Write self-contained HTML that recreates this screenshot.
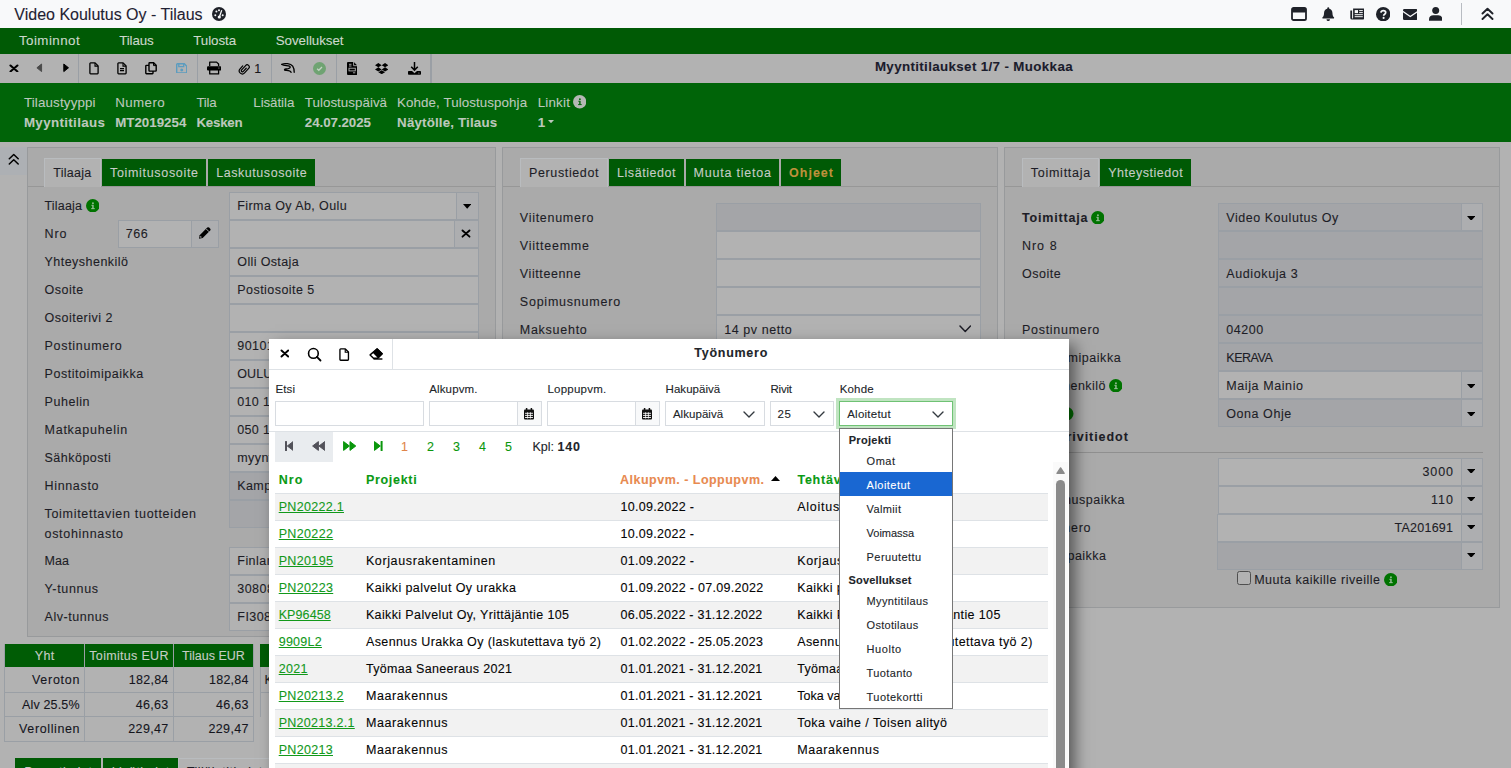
<!DOCTYPE html>
<html lang="fi"><head><meta charset="utf-8"><title>Video Koulutus Oy - Tilaus</title>
<style>
*{box-sizing:border-box;margin:0;padding:0}
html,body{width:1511px;height:768px;overflow:hidden;background:#b2b2b2;font-family:"Liberation Sans", sans-serif;color:#1d1d26}
#app{position:relative;width:1511px;height:768px;overflow:hidden}
#app div,#app svg,#app .t{position:absolute}
.t{white-space:pre;line-height:normal;text-decoration:none;color:#1d1d26;-webkit-text-stroke:.1px currentColor}
.lnk{text-decoration:underline;text-underline-offset:1px;text-decoration-thickness:1px}
.panel{background:#aaaaaa;border:1px solid #989a9c}
.f{background:#b2b2b2;border:1px solid #9a9fa5}
.fd{background:#a4a5a8;border:1px solid #9a9fa5}
.btn{background:#adaeb0;border:1px solid #9a9fa5}
.tab{background:#005a05}
.tabsel{background:#b2b2b2;border:1px solid #989a9c;border-bottom:none}
.sep{background:#9a9fa5;width:1px}
.mi{background:#fff;border:1px solid #d8dce1}
</style></head>
<body><div id="app">
<div class="" style="left:0px;top:0px;width:1511px;height:28px;background:#f8f9fa"></div>
<span class="t" style="left:14.30px;top:5.90px;font-size:16px;color:#1f2233;">Video Koulutus Oy - Tilaus</span>
<svg style="left:212px;top:7px" width="14" height="14" viewBox="0 0 14 14" ><circle cx="7" cy="7" r="7" fill="#1f2229"/><circle cx="3.3" cy="8.2" r="1" fill="#f8f9fa"/><circle cx="4.4" cy="4.4" r="1" fill="#f8f9fa"/><circle cx="7" cy="3.2" r="1" fill="#f8f9fa"/><circle cx="10.7" cy="8.2" r="1" fill="#f8f9fa"/><path d="M9.6 3.6L7.6 9.2" stroke="#f8f9fa" stroke-width="1.3" stroke-linecap="round"/><circle cx="7.3" cy="10" r="1.6" fill="#f8f9fa"/></svg>
<svg style="left:1291px;top:7px" width="16" height="14" viewBox="0 0 16 14" ><rect x="1" y="1" width="14" height="12" rx="1.6" fill="none" stroke="#1f2229" stroke-width="1.8"/><rect x="1" y="1" width="14" height="4.6" rx="1" fill="#1f2229"/></svg>
<svg style="left:1322px;top:7px" width="12.5" height="14" viewBox="0 0 12.5 14" ><path d="M6.25 0.3a1 1 0 0 1 1 1v.5c2 .5 3.2 2.100 3.2 4.2 0 2.400.7 3.500 1.500 4.300.5.500.2 1.300-.5 1.300H1.05c-.7 0-1-.8-.5-1.300C1.350 9.500 2.050 8.400 2.050 6c0-2.100 1.200-3.700 3.200-4.200v-.5a1 1 0 0 1 1-1Z" fill="#1f2229"/><path d="M4.5 12.3h3.500a1.750 1.750 0 0 1-3.500 0Z" fill="#1f2229"/></svg>
<svg style="left:1349.5px;top:8px" width="14.5" height="12" viewBox="0 0 14.5 12" ><path d="M3.2.5h10.3a.8 .8 0 0 1 .8 .8v8.700a1.600 1.600 0 0 1-1.600 1.600H2a1.700 1.700 0 0 1-1.700-1.700V2.600h1.800v7.300a.5 .5 0 0 0 1 0V.6Z" fill="#1f2229"/><rect x="4.700" y="2.100" width="3.300" height="3" fill="#f8f9fa"/><path d="M9.200 2.600h3.600M9.200 4.600h3.600M4.700 6.700h8.100M4.700 8.700h8.100" stroke="#f8f9fa" stroke-width="1"/></svg>
<svg style="left:1376px;top:7px" width="14.4" height="14.4" viewBox="0 0 14.4 14.4" ><circle cx="7.2" cy="7.2" r="7.2" fill="#1f2229"/><path d="M4.900 5.600c.2-1.300 1.100-2 2.400-2 1.400 0 2.400.8 2.400 2 0 1-.6 1.500-1.300 1.900-.5.300-.7.500-.7 1v.2" fill="none" stroke="#f8f9fa" stroke-width="1.700"/><circle cx="7.600" cy="10.900" r="1.050" fill="#f8f9fa"/></svg>
<svg style="left:1402.5px;top:8.5px" width="14.5" height="11" viewBox="0 0 14.5 11" ><path d="M1.300 0h11.900a1.300 1.300 0 0 1 1.300 1.300v.5L7.250 6.700 0 1.800v-.5A1.300 1.300 0 0 1 1.300 0Z" fill="#1f2229"/><path d="M0 3.300l7.250 4.900 7.250-4.900v6.400a1.300 1.300 0 0 1-1.300 1.300H1.300A1.300 1.300 0 0 1 0 9.700Z" fill="#1f2229"/></svg>
<svg style="left:1429px;top:7px" width="13.4" height="14" viewBox="0 0 13.4 14" ><circle cx="6.700" cy="3.600" r="3.500" fill="#1f2229"/><path d="M0 13.800v-1.600c0-2.300 1.900-3.900 4.200-3.900h5c2.300 0 4.200 1.600 4.200 3.900v1.600Z" fill="#1f2229"/></svg>
<div class="" style="left:1461px;top:3px;width:1px;height:22px;background:#b8bcc2"></div>
<svg style="left:1481px;top:6.5px" width="13" height="13.5" viewBox="0 0 13 13.5" ><path d="M1.500 6.500L6.500 1.700L11.500 6.500M1.500 12L6.500 7.200L11.500 12" fill="none" stroke="#1f2229" stroke-width="1.900" stroke-linecap="round" stroke-linejoin="round"/></svg>
<div class="" style="left:0px;top:28px;width:1511px;height:26px;background:#005a05"></div>
<span class="t" style="left:18.90px;top:32.90px;font-size:13.33px;color:#ccd8cc;letter-spacing:0.469px;">Toiminnot</span>
<span class="t" style="left:119.20px;top:32.90px;font-size:13.33px;color:#ccd8cc;letter-spacing:-0.113px;">Tilaus</span>
<span class="t" style="left:193.20px;top:32.90px;font-size:13.33px;color:#ccd8cc;letter-spacing:-0.036px;">Tulosta</span>
<span class="t" style="left:275.70px;top:32.90px;font-size:13.33px;color:#ccd8cc;letter-spacing:-0.027px;">Sovellukset</span>
<div class="" style="left:0px;top:54px;width:1511px;height:29px;background:#b2b2b2"></div>
<div class="sep" style="left:78px;top:54px;width:1px;height:29px;"></div>
<div class="sep" style="left:197px;top:54px;width:1px;height:29px;"></div>
<div class="sep" style="left:271px;top:54px;width:1px;height:29px;"></div>
<div class="sep" style="left:336px;top:54px;width:1px;height:29px;"></div>
<div class="sep" style="left:430px;top:54px;width:1px;height:29px;"></div>
<div class="sep" style="left:431px;top:54px;width:1px;height:29px;"></div>
<svg style="left:8.7px;top:63.53px" width="9.9" height="8.934000000000001" viewBox="0 0 9.9 8.934000000000001" ><path d="M1.5 1.5L8.4 7.434M8.4 1.5L1.5 7.434" stroke="#000" stroke-width="2.1" stroke-linecap="round"/></svg>
<svg style="left:36.3px;top:63.2px" width="6.4" height="9.6" viewBox="0 0 6.4 9.6" ><path d="M5.600 1V8.600L.9 4.800Z" fill="#4a4a4a" stroke="#4a4a4a" stroke-width="1" stroke-linejoin="round"/></svg>
<svg style="left:63.1px;top:63.2px" width="6.4" height="9.6" viewBox="0 0 6.4 9.6" ><path d="M.8 1V8.600L5.500 4.800Z" fill="#000" stroke="#000" stroke-width="1" stroke-linejoin="round"/></svg>
<svg style="left:88.7px;top:62px" width="10" height="12.5" viewBox="0 0 10 12.5" ><path d="M1.6 .9H6.1L9.1 3.9V11.1a.7 .7 0 0 1-.7 .7H1.6a.7 .7 0 0 1-.7-.7V1.6a.7 .7 0 0 1 .7-.7Z" fill="none" stroke="#000" stroke-width="1.3" stroke-linejoin="round"/><path d="M6 1V4.1H9" fill="none" stroke="#000" stroke-width="1.1"/></svg>
<svg style="left:117px;top:62px" width="10" height="12.5" viewBox="0 0 10 12.5" ><path d="M1.6 .9H6.1L9.1 3.9V11.1a.7 .7 0 0 1-.7 .7H1.6a.7 .7 0 0 1-.7-.7V1.6a.7 .7 0 0 1 .7-.7Z" fill="none" stroke="#000" stroke-width="1.3" stroke-linejoin="round"/><path d="M6 1V4.1H9" fill="none" stroke="#000" stroke-width="1.1"/><path d="M3 6.6H7M3 8.6H7" stroke="#000" stroke-width="1.1"/></svg>
<svg style="left:145px;top:62px" width="12" height="12.5" viewBox="0 0 12 12.5" ><path d="M4.600 .8H8.600L11.200 3.400V8.500a.6 .6 0 0 1-.6 .6H4.600a.6 .6 0 0 1-.6-.6V1.400a.6 .6 0 0 1 .6-.6Z" fill="none" stroke="#000" stroke-width="1.400"/><path d="M8.500 1V3.600H11" fill="none" stroke="#000" stroke-width="1"/><path d="M4 3.400H1.400a.6 .6 0 0 0-.6 .6V11.100a.6 .6 0 0 0 .6 .6H7.400a.6 .6 0 0 0 .6-.6V9.100" fill="none" stroke="#000" stroke-width="1.400"/></svg>
<svg style="left:175.5px;top:62.8px" width="11.5" height="10.7" viewBox="0 0 11.5 10.7" ><path d="M1.400 .7H8.300L10.800 3.200V9.300a.7 .7 0 0 1-.7 .7H1.400a.7 .7 0 0 1-.7-.7V1.400a.7 .7 0 0 1 .7-.7Z" fill="none" stroke="#5b9cbf" stroke-width="1.400"/><path d="M2.800 1V3.700H7.700V1" fill="none" stroke="#5b9cbf" stroke-width="1.300"/><circle cx="5.750" cy="6.900" r="1.500" fill="#5b9cbf"/></svg>
<svg style="left:207px;top:61.2px" width="14.3" height="13.6" viewBox="0 0 14.3 13.6" ><path d="M2.700 5V1.100H9.600L11.600 3V5" fill="none" stroke="#000" stroke-width="1.300" stroke-linejoin="round"/><rect x="0" y="5.300" width="14.300" height="4.300" rx="1.100" fill="#000"/><circle cx="11.900" cy="7" r=".6" fill="#b2b2b2"/><path d="M2.700 9V12.900H11.600V9" fill="none" stroke="#000" stroke-width="1.300" stroke-linejoin="round"/></svg>
<svg style="left:238.3px;top:61.6px" width="12.6" height="13.4" viewBox="0 0 12.6 13.4" ><g transform="translate(6.2 6.8) rotate(42) scale(.8)"><path d="M-3.800 -1.500V3.500A3.800 3.800 0 0 0 3.800 3.500V-4.200A2.600 2.600 0 0 0 -1.400 -4.200V3.200A1.400 1.400 0 0 0 1.400 3.200V-2.200" fill="none" stroke="#000" stroke-width="1.500" stroke-linecap="round"/></g></svg>
<span class="t" style="left:254.20px;top:62.00px;font-size:12.5px;color:#16161d;">1</span>
<svg style="left:281px;top:63px" width="14" height="10.5" viewBox="0 0 14 10.5" ><path d="M.9 1.400C4 .2 9.500 .1 11.700 3.200 12.900 5 13.200 7.500 13.200 9.300" fill="none" stroke="#000" stroke-width="1.300" stroke-linecap="round"/><path d="M.9 1.400C3 3 6.500 2.300 8.500 3.200 10.300 4.200 8.500 5.900 4.800 6 3 6.100 3 7.300 4.800 7.400 7.500 7.500 9.600 7.400 10.100 9.400" fill="none" stroke="#000" stroke-width="1.300" stroke-linecap="round" stroke-linejoin="round"/></svg>
<svg style="left:313px;top:61.7px" width="13" height="13" viewBox="0 0 13 13" ><circle cx="6.500" cy="6.500" r="6.500" fill="#6fa372"/><path d="M4.100 6.700L5.800 8.300L9 5" fill="none" stroke="#c4d3c4" stroke-width="1.300"/></svg>
<svg style="left:346.5px;top:61.7px" width="10.3" height="13" viewBox="0 0 10.3 13" ><path d="M1 0H6.800L10.300 3.500V12a1 1 0 0 1-1 1H1a1 1 0 0 1-1-1V1a1 1 0 0 1 1-1Z" fill="#000"/><path d="M6.600 0V3.700H10.300" fill="none" stroke="#b2b2b2" stroke-width=".9"/><rect x="2" y="6.200" width="6.300" height="2.700" fill="none" stroke="#b2b2b2" stroke-width=".9"/><path d="M2 2.300H4.500M2 4H4.500M6 10.800H8.300" stroke="#b2b2b2" stroke-width=".9"/></svg>
<svg style="left:375px;top:62.8px" width="13.4" height="11.2" viewBox="0 0 13.4 11.2" ><path d="M3.350 0L6.700 2.150 3.350 4.300 0 2.150ZM10.050 0L13.400 2.150 10.050 4.300 6.700 2.150ZM0 6.450L3.350 4.300 6.700 6.450 3.350 8.600ZM10.050 4.300L13.400 6.450 10.050 8.600 6.700 6.450ZM3.350 9.300L6.700 7.150 10.050 9.300 6.700 11.200Z" fill="#000"/></svg>
<svg style="left:407.5px;top:62px" width="13" height="12.7" viewBox="0 0 13 12.7" ><path d="M6.500 0V8M3.200 4.800L6.500 8.100L9.800 4.800" fill="none" stroke="#000" stroke-width="1.500" stroke-linejoin="miter"/><path d="M.8 9H4L6.500 11.200L9 9H12.200a.8 .8 0 0 1 .8 .8V11.900a.8 .8 0 0 1-.8 .8H.8a.8 .8 0 0 1-.8-.8V9.800a.8 .8 0 0 1 .8-.8Z" fill="#000"/><circle cx="10.900" cy="11" r=".55" fill="#b2b2b2"/></svg>
<span class="t" style="left:874.90px;top:59.20px;font-size:13.33px;font-weight:700;color:#1b1c2c;letter-spacing:0.368px;">Myyntitilaukset 1/7 - Muokkaa</span>
<div class="" style="left:0px;top:83px;width:1511px;height:59px;background:#006408"></div>
<span class="t" style="left:23.90px;top:95.30px;font-size:13.33px;color:#bcc8bc;letter-spacing:0.164px;">Tilaustyyppi</span>
<span class="t" style="left:23.90px;top:115.00px;font-size:13.33px;font-weight:700;color:#bcc8bc;letter-spacing:0.361px;">Myyntitilaus</span>
<span class="t" style="left:115.20px;top:95.30px;font-size:13.33px;color:#bcc8bc;letter-spacing:0.419px;">Numero</span>
<span class="t" style="left:115.20px;top:115.00px;font-size:13.33px;font-weight:700;color:#bcc8bc;letter-spacing:0.007px;">MT2019254</span>
<span class="t" style="left:196.40px;top:95.30px;font-size:13.33px;color:#bcc8bc;letter-spacing:-0.195px;">Tila</span>
<span class="t" style="left:196.40px;top:115.00px;font-size:13.33px;font-weight:700;color:#bcc8bc;letter-spacing:-0.224px;">Kesken</span>
<span class="t" style="left:253.30px;top:95.30px;font-size:13.33px;color:#bcc8bc;letter-spacing:-0.071px;">Lisätila</span>
<span class="t" style="left:304.80px;top:95.30px;font-size:13.33px;color:#bcc8bc;letter-spacing:0.038px;">Tulostuspäivä</span>
<span class="t" style="left:304.80px;top:115.00px;font-size:13.33px;font-weight:700;color:#bcc8bc;letter-spacing:-0.058px;">24.07.2025</span>
<span class="t" style="left:397.10px;top:95.30px;font-size:13.33px;color:#bcc8bc;letter-spacing:0.095px;">Kohde, Tulostuspohja</span>
<span class="t" style="left:397.10px;top:115.00px;font-size:13.33px;font-weight:700;color:#bcc8bc;letter-spacing:0.165px;">Näytölle, Tilaus</span>
<span class="t" style="left:537.70px;top:95.30px;font-size:13.33px;color:#bcc8bc;letter-spacing:0.215px;">Linkit</span>
<span class="t" style="left:537.70px;top:115.00px;font-size:13.33px;font-weight:700;color:#bcc8bc;">1</span>
<svg style="left:572.65px;top:95.4px" width="13.4" height="13.4" viewBox="0 0 13.4 13.4" ><circle cx="6.7" cy="6.7" r="6.7" fill="#b5b8b5"/><rect x="6.2" y="5.8" width="1.4" height="3.8" fill="#006408"/><rect x="5.300000000000001" y="5.8" width="1.4" height=".9" fill="#006408"/><rect x="5.1" y="9.1" width="3.6" height="1" fill="#006408"/><circle cx="6.9" cy="4.2" r=".9" fill="#006408"/></svg>
<svg style="left:548.1px;top:120px" width="6" height="3.2" viewBox="0 0 6 3.2" ><path d="M0 0H6L3 3.200Z" fill="#bcc8bc"/></svg>
<div class="" style="left:0px;top:147px;width:27px;height:28px;background:#adb0b4"></div>
<svg style="left:7.8px;top:153.3px" width="11.5" height="12.5" viewBox="0 0 11.5 12.5" ><path d="M1.300 5.800L5.750 1.500L10.200 5.800M1.300 11L5.750 6.700L10.200 11" fill="none" stroke="#000" stroke-width="1.500" stroke-linecap="round" stroke-linejoin="round"/></svg>
<div class="panel" style="left:27px;top:147px;width:469px;height:490px;"></div>
<div class="" style="left:28px;top:186px;width:467px;height:1px;background:#979797"></div>
<div class="tabsel" style="left:44px;top:158px;width:56.5px;height:29px;border-color:#b9bcbf;background:#b2b2b2"></div>
<span class="t" style="left:53.30px;top:165.80px;font-size:12.5px;letter-spacing:0.257px;">Tilaaja</span>
<div class="tab" style="left:102px;top:159px;width:104px;height:27px;"></div>
<span class="t" style="left:110.00px;top:165.80px;font-size:12.5px;color:#c6cdc6;letter-spacing:0.677px;">Toimitusosoite</span>
<div class="tab" style="left:208px;top:159px;width:107px;height:27px;"></div>
<span class="t" style="left:216.25px;top:165.80px;font-size:12.5px;color:#c6cdc6;letter-spacing:0.547px;">Laskutusosoite</span>
<span class="t" style="left:44.50px;top:199.20px;font-size:12.5px;letter-spacing:0.190px;">Tilaaja</span>
<div class="f" style="left:229px;top:192px;width:250px;height:28px;"></div>
<div class="btn" style="left:456px;top:192px;width:23px;height:28px;"></div>
<svg style="left:462.8px;top:203.79999999999998px" width="8.4" height="4.8" viewBox="0 0 8.4 4.8" ><path d="M0 0H8.4L4.2 4.8Z" fill="#000"/></svg>
<span class="t" style="left:237.30px;top:199.00px;font-size:12.5px;letter-spacing:0.412px;">Firma Oy Ab, Oulu</span>
<span class="t" style="left:44.50px;top:227.20px;font-size:12.5px;letter-spacing:0.922px;">Nro</span>
<div class="f" style="left:229px;top:220px;width:250px;height:28px;"></div>
<div class="btn" style="left:454px;top:220px;width:25px;height:28px;"></div>
<svg style="left:461.3px;top:228.82px" width="10" height="9.16" viewBox="0 0 10 9.16" ><path d="M1.5 1.5L8.5 7.66M8.5 1.5L1.5 7.66" stroke="#000" stroke-width="1.9" stroke-linecap="round"/></svg>
<span class="t" style="left:44.50px;top:255.20px;font-size:12.5px;letter-spacing:0.473px;">Yhteyshenkilö</span>
<div class="f" style="left:229px;top:248px;width:250px;height:28px;"></div>
<span class="t" style="left:237.30px;top:255.00px;font-size:12.5px;letter-spacing:0.364px;">Olli Ostaja</span>
<span class="t" style="left:44.50px;top:283.20px;font-size:12.5px;letter-spacing:0.532px;">Osoite</span>
<div class="f" style="left:229px;top:276px;width:250px;height:28px;"></div>
<span class="t" style="left:237.30px;top:283.00px;font-size:12.5px;letter-spacing:0.443px;">Postiosoite 5</span>
<span class="t" style="left:44.50px;top:311.20px;font-size:12.5px;letter-spacing:0.497px;">Osoiterivi 2</span>
<div class="f" style="left:229px;top:304px;width:250px;height:28px;"></div>
<span class="t" style="left:44.50px;top:339.20px;font-size:12.5px;letter-spacing:0.711px;">Postinumero</span>
<div class="f" style="left:229px;top:332px;width:250px;height:28px;"></div>
<span class="t" style="left:237.30px;top:339.00px;font-size:12.5px;letter-spacing:0.434px;">90101</span>
<span class="t" style="left:44.50px;top:367.20px;font-size:12.5px;letter-spacing:0.558px;">Postitoimipaikka</span>
<div class="f" style="left:229px;top:360px;width:250px;height:28px;"></div>
<span class="t" style="left:237.30px;top:367.00px;font-size:12.5px;letter-spacing:0.089px;">OULU</span>
<span class="t" style="left:44.50px;top:395.20px;font-size:12.5px;letter-spacing:0.549px;">Puhelin</span>
<div class="f" style="left:229px;top:388px;width:250px;height:28px;"></div>
<span class="t" style="left:237.30px;top:395.00px;font-size:12.5px;letter-spacing:0.321px;">010 123 4567</span>
<span class="t" style="left:44.50px;top:423.20px;font-size:12.5px;letter-spacing:0.758px;">Matkapuhelin</span>
<div class="f" style="left:229px;top:416px;width:250px;height:28px;"></div>
<span class="t" style="left:237.30px;top:423.00px;font-size:12.5px;letter-spacing:0.321px;">050 123 4567</span>
<span class="t" style="left:44.50px;top:451.20px;font-size:12.5px;letter-spacing:0.493px;">Sähköposti</span>
<div class="f" style="left:229px;top:444px;width:250px;height:28px;"></div>
<span class="t" style="left:237.30px;top:451.00px;font-size:12.5px;letter-spacing:0.406px;">myynti@firma.fi</span>
<span class="t" style="left:44.50px;top:479.20px;font-size:12.5px;letter-spacing:0.665px;">Hinnasto</span>
<div class="fd" style="left:229px;top:472px;width:250px;height:28px;"></div>
<span class="t" style="left:237.30px;top:479.00px;font-size:12.5px;letter-spacing:0.386px;">Kampanja</span>
<svg style="left:85.65px;top:198.5px" width="13.5" height="13.5" viewBox="0 0 13.5 13.5" ><circle cx="6.75" cy="6.75" r="6.75" fill="#007300"/><rect x="6.25" y="5.85" width="1.4" height="3.8" fill="#9dc09d"/><rect x="5.35" y="5.85" width="1.4" height=".9" fill="#9dc09d"/><rect x="5.15" y="9.15" width="3.6" height="1" fill="#9dc09d"/><circle cx="6.95" cy="4.25" r=".9" fill="#9dc09d"/></svg>
<div class="f" style="left:118px;top:220px;width:74px;height:28px;"></div>
<span class="t" style="left:125.80px;top:227.20px;font-size:12.5px;letter-spacing:0.470px;">766</span>
<div class="btn" style="left:191px;top:220px;width:28px;height:28px;"></div>
<svg style="left:198.4px;top:226px" width="13.8" height="13.8" viewBox="0 0 13 13" ><path d="M1 12L1.600 8.600L8.700 1.500a1.300 1.300 0 0 1 1.800 0L11.500 2.500a1.300 1.300 0 0 1 0 1.800L4.400 11.400Z" fill="#000"/><path d="M7.600 2.600L10.400 5.400" stroke="#adaeb0" stroke-width=".9"/><path d="M2.300 9.300L3.700 10.700L2 11Z" fill="#adaeb0"/></svg>
<span class="t" style="left:44.50px;top:507.00px;font-size:12.5px;letter-spacing:0.695px;">Toimitettavien tuotteiden</span>
<span class="t" style="left:44.50px;top:527.00px;font-size:12.5px;letter-spacing:0.692px;">ostohinnasto</span>
<div class="fd" style="left:229px;top:500px;width:250px;height:28px;"></div>
<span class="t" style="left:44.50px;top:554.20px;font-size:12.5px;letter-spacing:0.086px;">Maa</span>
<div class="f" style="left:229px;top:547px;width:250px;height:28px;"></div>
<span class="t" style="left:237.30px;top:554.00px;font-size:12.5px;letter-spacing:0.450px;">Finland</span>
<span class="t" style="left:44.50px;top:582.20px;font-size:12.5px;letter-spacing:0.658px;">Y-tunnus</span>
<div class="f" style="left:229px;top:575px;width:250px;height:28px;"></div>
<span class="t" style="left:237.30px;top:582.00px;font-size:12.5px;letter-spacing:0.450px;">3080834-5</span>
<span class="t" style="left:44.50px;top:610.20px;font-size:12.5px;letter-spacing:0.549px;">Alv-tunnus</span>
<div class="f" style="left:229px;top:603px;width:250px;height:28px;"></div>
<span class="t" style="left:237.30px;top:610.00px;font-size:12.5px;letter-spacing:0.450px;">FI30808345</span>
<div class="panel" style="left:502px;top:147px;width:496px;height:520px;"></div>
<div class="" style="left:503px;top:186px;width:494px;height:1px;background:#979797"></div>
<div class="tabsel" style="left:520px;top:158px;width:87.5px;height:29px;border-color:#b9bcbf;background:#b2b2b2"></div>
<span class="t" style="left:529.00px;top:165.80px;font-size:12.5px;letter-spacing:0.627px;">Perustiedot</span>
<div class="tab" style="left:609px;top:159px;width:74.5px;height:27px;"></div>
<span class="t" style="left:617.00px;top:165.80px;font-size:12.5px;color:#c6cdc6;letter-spacing:0.554px;">Lisätiedot</span>
<div class="tab" style="left:685.5px;top:159px;width:93.5px;height:27px;"></div>
<span class="t" style="left:693.50px;top:165.80px;font-size:12.5px;color:#c6cdc6;letter-spacing:0.791px;">Muuta tietoa</span>
<div class="tab" style="left:781px;top:159px;width:60px;height:27px;"></div>
<span class="t" style="left:789.00px;top:165.80px;font-size:12.5px;font-weight:700;color:#bf913c;letter-spacing:1.019px;">Ohjeet</span>
<span class="t" style="left:519.80px;top:210.70px;font-size:12.5px;letter-spacing:0.722px;">Viitenumero</span>
<div class="fd" style="left:716px;top:203px;width:265px;height:28px;"></div>
<span class="t" style="left:519.80px;top:238.70px;font-size:12.5px;letter-spacing:0.767px;">Viitteemme</span>
<div class="f" style="left:716px;top:231px;width:265px;height:28px;"></div>
<span class="t" style="left:519.80px;top:266.70px;font-size:12.5px;letter-spacing:0.603px;">Viitteenne</span>
<div class="f" style="left:716px;top:259px;width:265px;height:28px;"></div>
<span class="t" style="left:519.80px;top:294.70px;font-size:12.5px;letter-spacing:0.774px;">Sopimusnumero</span>
<div class="f" style="left:716px;top:287px;width:265px;height:28px;"></div>
<span class="t" style="left:519.80px;top:322.70px;font-size:12.5px;letter-spacing:0.730px;">Maksuehto</span>
<div class="f" style="left:716px;top:315px;width:265px;height:28px;"></div>
<span class="t" style="left:724.30px;top:323.00px;font-size:12.5px;letter-spacing:0.554px;">14 pv netto</span>
<svg style="left:958.95px;top:325.25px" width="12.5" height="7.5" viewBox="0 0 12.5 7.5" ><path d="M1 1L6.25 6.5L11.5 1" fill="none" stroke="#1d1d26" stroke-width="1.5" stroke-linecap="round" stroke-linejoin="round"/></svg>
<div class="panel" style="left:1004px;top:147px;width:496px;height:461px;"></div>
<div class="" style="left:1005px;top:186px;width:494px;height:1px;background:#979797"></div>
<div class="tabsel" style="left:1022px;top:158px;width:77px;height:29px;border-color:#b9bcbf;background:#b2b2b2"></div>
<span class="t" style="left:1030.75px;top:165.80px;font-size:12.5px;letter-spacing:0.745px;">Toimittaja</span>
<div class="tab" style="left:1100px;top:159px;width:91px;height:27px;"></div>
<span class="t" style="left:1108.25px;top:165.80px;font-size:12.5px;color:#c6cdc6;letter-spacing:0.518px;">Yhteystiedot</span>
<span class="t" style="left:1022.00px;top:210.70px;font-size:12.5px;font-weight:700;letter-spacing:0.821px;">Toimittaja</span>
<div class="fd" style="left:1218px;top:203px;width:265px;height:28px;"></div>
<div class="btn" style="left:1460.5px;top:203px;width:22.5px;height:28px;"></div>
<svg style="left:1467.05px;top:215.6px" width="8.4" height="4.8" viewBox="0 0 8.4 4.8" ><path d="M0 0H8.4L4.2 4.8Z" fill="#000"/></svg>
<span class="t" style="left:1226.30px;top:211.00px;font-size:12.5px;letter-spacing:0.537px;">Video Koulutus Oy</span>
<span class="t" style="left:1022.00px;top:238.70px;font-size:12.5px;letter-spacing:0.922px;">Nro</span>
<div class="fd" style="left:1218px;top:231px;width:265px;height:28px;"></div>
<span class="t" style="left:1022.00px;top:266.70px;font-size:12.5px;letter-spacing:0.532px;">Osoite</span>
<div class="fd" style="left:1218px;top:259px;width:265px;height:28px;"></div>
<span class="t" style="left:1226.30px;top:267.00px;font-size:12.5px;letter-spacing:0.607px;">Audiokuja 3</span>
<div class="fd" style="left:1218px;top:287px;width:265px;height:28px;"></div>
<span class="t" style="left:1022.00px;top:322.70px;font-size:12.5px;letter-spacing:0.711px;">Postinumero</span>
<div class="fd" style="left:1218px;top:315px;width:265px;height:28px;"></div>
<span class="t" style="left:1226.30px;top:323.00px;font-size:12.5px;letter-spacing:0.559px;">04200</span>
<span class="t" style="left:1022.00px;top:350.70px;font-size:12.5px;letter-spacing:0.558px;">Postitoimipaikka</span>
<div class="fd" style="left:1218px;top:343px;width:265px;height:28px;"></div>
<span class="t" style="left:1226.30px;top:351.00px;font-size:12.5px;letter-spacing:-0.472px;">KERAVA</span>
<span class="t" style="left:1022.00px;top:378.70px;font-size:12.5px;letter-spacing:0.473px;">Yhteyshenkilö</span>
<div class="f" style="left:1218px;top:371px;width:265px;height:28px;"></div>
<div class="btn" style="left:1460.5px;top:371px;width:22.5px;height:28px;"></div>
<svg style="left:1467.05px;top:383.6px" width="8.4" height="4.8" viewBox="0 0 8.4 4.8" ><path d="M0 0H8.4L4.2 4.8Z" fill="#000"/></svg>
<span class="t" style="left:1226.30px;top:379.00px;font-size:12.5px;letter-spacing:0.593px;">Maija Mainio</span>
<span class="t" style="left:1022.00px;top:406.70px;font-size:12.5px;letter-spacing:0.836px;">Myyjä</span>
<div class="fd" style="left:1218px;top:399px;width:265px;height:28px;"></div>
<div class="btn" style="left:1460.5px;top:399px;width:22.5px;height:28px;"></div>
<svg style="left:1467.05px;top:411.6px" width="8.4" height="4.8" viewBox="0 0 8.4 4.8" ><path d="M0 0H8.4L4.2 4.8Z" fill="#000"/></svg>
<span class="t" style="left:1226.30px;top:407.00px;font-size:12.5px;letter-spacing:0.554px;">Oona Ohje</span>
<span class="t" style="left:1049.70px;top:238.70px;font-size:12.5px;">8</span>
<svg style="left:1090.75px;top:210.6px" width="13.5" height="13.5" viewBox="0 0 13.5 13.5" ><circle cx="6.75" cy="6.75" r="6.75" fill="#007300"/><rect x="6.25" y="5.85" width="1.4" height="3.8" fill="#9dc09d"/><rect x="5.35" y="5.85" width="1.4" height=".9" fill="#9dc09d"/><rect x="5.15" y="9.15" width="3.6" height="1" fill="#9dc09d"/><circle cx="6.95" cy="4.25" r=".9" fill="#9dc09d"/></svg>
<svg style="left:1108.65px;top:378.8px" width="13.5" height="13.5" viewBox="0 0 13.5 13.5" ><circle cx="6.75" cy="6.75" r="6.75" fill="#007300"/><rect x="6.25" y="5.85" width="1.4" height="3.8" fill="#9dc09d"/><rect x="5.35" y="5.85" width="1.4" height=".9" fill="#9dc09d"/><rect x="5.15" y="9.15" width="3.6" height="1" fill="#9dc09d"/><circle cx="6.95" cy="4.25" r=".9" fill="#9dc09d"/></svg>
<svg style="left:1060.15px;top:406.8px" width="13.5" height="13.5" viewBox="0 0 13.5 13.5" ><circle cx="6.75" cy="6.75" r="6.75" fill="#007300"/><rect x="6.25" y="5.85" width="1.4" height="3.8" fill="#9dc09d"/><rect x="5.35" y="5.85" width="1.4" height=".9" fill="#9dc09d"/><rect x="5.15" y="9.15" width="3.6" height="1" fill="#9dc09d"/><circle cx="6.95" cy="4.25" r=".9" fill="#9dc09d"/></svg>
<span class="t" style="left:1022.00px;top:430.00px;font-size:12.5px;font-weight:700;letter-spacing:0.941px;">Oletusrivitiedot</span>
<div class="" style="left:1022px;top:452px;width:461px;height:1px;background:#8f8f8f"></div>
<span class="t" style="left:1022.00px;top:465.00px;font-size:12.5px;letter-spacing:1.300px;">Tili</span>
<div class="f" style="left:1218px;top:458px;width:265px;height:28px;"></div>
<div class="btn" style="left:1460.5px;top:458px;width:22.5px;height:28px;"></div>
<svg style="left:1467.05px;top:468.6px" width="8.4" height="4.8" viewBox="0 0 8.4 4.8" ><path d="M0 0H8.4L4.2 4.8Z" fill="#000"/></svg>
<span class="t" style="left:1422.50px;top:465.00px;font-size:12.5px;letter-spacing:0.896px;">3000</span>
<span class="t" style="left:1022.00px;top:493.00px;font-size:12.5px;letter-spacing:0.521px;">Kustannuspaikka</span>
<div class="f" style="left:1218px;top:486px;width:265px;height:28px;"></div>
<div class="btn" style="left:1460.5px;top:486px;width:22.5px;height:28px;"></div>
<svg style="left:1467.05px;top:496.6px" width="8.4" height="4.8" viewBox="0 0 8.4 4.8" ><path d="M0 0H8.4L4.2 4.8Z" fill="#000"/></svg>
<span class="t" style="left:1431.00px;top:493.00px;font-size:12.5px;letter-spacing:1.031px;">110</span>
<span class="t" style="left:1022.00px;top:521.00px;font-size:12.5px;letter-spacing:0.746px;">Työnumero</span>
<div class="f" style="left:1217px;top:514px;width:266px;height:28px;"></div>
<div class="btn" style="left:1460.5px;top:514px;width:22.5px;height:28px;"></div>
<svg style="left:1467.05px;top:524.6px" width="8.4" height="4.8" viewBox="0 0 8.4 4.8" ><path d="M0 0H8.4L4.2 4.8Z" fill="#000"/></svg>
<span class="t" style="left:1394.50px;top:521.00px;font-size:12.5px;letter-spacing:0.248px;">TA201691</span>
<span class="t" style="left:1022.00px;top:549.00px;font-size:12.5px;letter-spacing:0.475px;">Varastopaikka</span>
<div class="fd" style="left:1217px;top:542px;width:266px;height:28px;"></div>
<div class="btn" style="left:1460.5px;top:542px;width:22.5px;height:28px;"></div>
<svg style="left:1467.05px;top:552.6px" width="8.4" height="4.8" viewBox="0 0 8.4 4.8" ><path d="M0 0H8.4L4.2 4.8Z" fill="#000"/></svg>
<div class="" style="left:1237px;top:571px;width:13.5px;height:13.5px;background:#b2b2b2;border:1.200px solid #4f4f4f;border-radius:2.500px"></div>
<span class="t" style="left:1254.20px;top:573.00px;font-size:12.5px;letter-spacing:0.508px;">Muuta kaikille riveille</span>
<svg style="left:1383.65px;top:572.9px" width="13.5" height="13.5" viewBox="0 0 13.5 13.5" ><circle cx="6.75" cy="6.75" r="6.75" fill="#007300"/><rect x="6.25" y="5.85" width="1.4" height="3.8" fill="#9dc09d"/><rect x="5.35" y="5.85" width="1.4" height=".9" fill="#9dc09d"/><rect x="5.15" y="9.15" width="3.6" height="1" fill="#9dc09d"/><circle cx="6.95" cy="4.25" r=".9" fill="#9dc09d"/></svg>
<div class="" style="left:4px;top:643.5px;width:250px;height:98px;background:#9a9fa5"></div>
<div class="" style="left:5.0px;top:644px;width:79.0px;height:22.5px;background:#005c05"></div>
<span class="t" style="left:34.70px;top:649.00px;font-size:12.5px;color:#c6cdc6;letter-spacing:0.417px;">Yht</span>
<div class="" style="left:5.0px;top:667.0px;width:79.0px;height:24.5px;background:#b2b2b2"></div>
<span class="t" style="left:31.90px;top:673.00px;font-size:12.5px;color:#15151d;letter-spacing:0.751px;">Veroton</span>
<div class="" style="left:5.0px;top:692.5px;width:79.0px;height:23.5px;background:#b2b2b2"></div>
<span class="t" style="left:22.10px;top:698.00px;font-size:12.5px;color:#15151d;letter-spacing:0.140px;">Alv 25.5%</span>
<div class="" style="left:5.0px;top:717.0px;width:79.0px;height:23.5px;background:#b2b2b2"></div>
<span class="t" style="left:19.10px;top:722.00px;font-size:12.5px;color:#15151d;letter-spacing:0.610px;">Verollinen</span>
<div class="" style="left:85.0px;top:644px;width:87.80000000000001px;height:22.5px;background:#005c05"></div>
<span class="t" style="left:89.30px;top:649.00px;font-size:12.5px;color:#c6cdc6;letter-spacing:0.316px;">Toimitus EUR</span>
<div class="" style="left:85.0px;top:667.0px;width:87.80000000000001px;height:24.5px;background:#b2b2b2"></div>
<span class="t" style="left:128.80px;top:673.00px;font-size:12.5px;color:#15151d;letter-spacing:0.253px;">182,84</span>
<div class="" style="left:85.0px;top:692.5px;width:87.80000000000001px;height:23.5px;background:#b2b2b2"></div>
<span class="t" style="left:135.80px;top:698.00px;font-size:12.5px;color:#15151d;letter-spacing:0.305px;">46,63</span>
<div class="" style="left:85.0px;top:717.0px;width:87.80000000000001px;height:23.5px;background:#b2b2b2"></div>
<span class="t" style="left:128.30px;top:722.00px;font-size:12.5px;color:#15151d;letter-spacing:0.353px;">229,47</span>
<div class="" style="left:173.8px;top:644px;width:79.19999999999999px;height:22.5px;background:#005c05"></div>
<span class="t" style="left:181.95px;top:649.00px;font-size:12.5px;color:#c6cdc6;letter-spacing:0.017px;">Tilaus EUR</span>
<div class="" style="left:173.8px;top:667.0px;width:79.19999999999999px;height:24.5px;background:#b2b2b2"></div>
<span class="t" style="left:209.00px;top:673.00px;font-size:12.5px;color:#15151d;letter-spacing:0.253px;">182,84</span>
<div class="" style="left:173.8px;top:692.5px;width:79.19999999999999px;height:23.5px;background:#b2b2b2"></div>
<span class="t" style="left:216.00px;top:698.00px;font-size:12.5px;color:#15151d;letter-spacing:0.305px;">46,63</span>
<div class="" style="left:173.8px;top:717.0px;width:79.19999999999999px;height:23.5px;background:#b2b2b2"></div>
<span class="t" style="left:208.50px;top:722.00px;font-size:12.5px;color:#15151d;letter-spacing:0.353px;">229,47</span>
<div class="" style="left:259.5px;top:643.5px;width:200px;height:73.5px;background:#9a9fa5"></div>
<div class="" style="left:260px;top:644px;width:199px;height:22.5px;background:#005c05"></div>
<div class="" style="left:260.5px;top:667px;width:198px;height:24.5px;background:#b2b2b2"></div>
<div class="" style="left:260.5px;top:692.5px;width:198px;height:24px;background:#b2b2b2"></div>
<span class="t" style="left:264.60px;top:672.80px;font-size:12.5px;letter-spacing:0.450px;">Kate</span>
<div class="tab" style="left:15px;top:758px;width:86px;height:12px;"></div>
<div class="tab" style="left:103px;top:758px;width:75px;height:12px;"></div>
<div class="tabsel" style="left:178px;top:757.5px;width:100px;height:12px;border-color:#b9bcbf"></div>
<span class="t" style="left:24.13px;top:764.60px;font-size:12.5px;color:#c6cdc6;letter-spacing:0.450px;">Perustiedot</span>
<span class="t" style="left:111.72px;top:764.60px;font-size:12.5px;color:#c6cdc6;letter-spacing:0.450px;">Lisätiedot</span>
<span class="t" style="left:187.00px;top:764.60px;font-size:12.5px;letter-spacing:0.450px;">Tiliöintitiedot</span>
<div class="" style="left:269px;top:339px;width:800px;height:440px;background:#fff;box-shadow:6px 6px 14px rgba(0,0,0,.5)"></div>
<div class="" style="left:269px;top:369px;width:800px;height:1px;background:#dee2e6"></div>
<div class="" style="left:392px;top:339px;width:1px;height:30px;background:#dee2e6"></div>
<svg style="left:279.75px;top:349.38px" width="9.7" height="9.030000000000001" viewBox="0 0 9.7 9.030000000000001" ><path d="M1.5 1.5L8.2 7.53M8.2 1.5L1.5 7.53" stroke="#000" stroke-width="1.9" stroke-linecap="round"/></svg>
<svg style="left:307.3px;top:347px" width="15" height="15" viewBox="0 0 15 15" ><circle cx="6.400" cy="6.400" r="4.850" fill="none" stroke="#000" stroke-width="1.600"/><path d="M9.900 9.900L13.500 13.500" stroke="#000" stroke-width="1.800" stroke-linecap="round"/></svg>
<svg style="left:339.3px;top:347.6px" width="10.4" height="13" viewBox="0 0 10 12.5" ><path d="M1.6 .9H6.1L9.1 3.9V11.1a.7 .7 0 0 1-.7 .7H1.6a.7 .7 0 0 1-.7-.7V1.6a.7 .7 0 0 1 .7-.7Z" fill="none" stroke="#000" stroke-width="1.3" stroke-linejoin="round"/><path d="M6 1V4.1H9" fill="none" stroke="#000" stroke-width="1.1"/></svg>
<svg style="left:368.5px;top:348px" width="14" height="12.5" viewBox="0 0 14 12.5" ><path d="M8.200 .9L13.100 5.800L8.600 10.300H4.500L1.100 6.900Z" fill="#fff" stroke="#000" stroke-width="1.400" stroke-linejoin="round"/><path d="M8.200 .9L13.100 5.800L9.400 9.500L4.500 4.600Z" fill="#000" stroke="#000" stroke-width="1.400" stroke-linejoin="round"/><path d="M4.500 11H13.400" stroke="#000" stroke-width="1.400"/></svg>
<span class="t" style="left:694.30px;top:346.00px;font-size:12.5px;font-weight:700;color:#212529;letter-spacing:0.732px;">Työnumero</span>
<span class="t" style="left:275.50px;top:382.90px;font-size:11.5px;color:#212529;letter-spacing:0.109px;">Etsi</span>
<div class="mi" style="left:275px;top:401px;width:149px;height:25px;"></div>
<span class="t" style="left:429.20px;top:382.90px;font-size:11.5px;color:#212529;letter-spacing:0.143px;">Alkupvm.</span>
<div class="mi" style="left:429px;top:401px;width:89px;height:25px;"></div>
<div class="mi" style="left:517px;top:401px;width:25px;height:25px;background:#f8f9fa"></div>
<svg style="left:524.3px;top:408.3px" width="10" height="11.4" viewBox="0 0 10 11.4" ><path d="M2.600 0V2.500M7.400 0V2.500" stroke="#111" stroke-width="1.500"/><rect x="0" y="1.400" width="10" height="10" rx="1" fill="#111"/><path d="M1 5.300H9M1 7.400H9M1 9.500H9" stroke="#fff" stroke-width=".9"/><path d="M3.600 4.300V10.500M6.400 4.300V10.500" stroke="#fff" stroke-width=".8"/></svg>
<span class="t" style="left:547.40px;top:382.90px;font-size:11.5px;color:#212529;letter-spacing:0.249px;">Loppupvm.</span>
<div class="mi" style="left:547px;top:401px;width:89px;height:25px;"></div>
<div class="mi" style="left:635px;top:401px;width:25px;height:25px;background:#f8f9fa"></div>
<svg style="left:642.3px;top:408.3px" width="10" height="11.4" viewBox="0 0 10 11.4" ><path d="M2.600 0V2.500M7.400 0V2.500" stroke="#111" stroke-width="1.500"/><rect x="0" y="1.400" width="10" height="10" rx="1" fill="#111"/><path d="M1 5.300H9M1 7.400H9M1 9.500H9" stroke="#fff" stroke-width=".9"/><path d="M3.600 4.300V10.500M6.400 4.300V10.500" stroke="#fff" stroke-width=".8"/></svg>
<span class="t" style="left:665.60px;top:382.90px;font-size:11.5px;color:#212529;letter-spacing:0.032px;">Hakupäivä</span>
<div class="mi" style="left:665px;top:401px;width:100px;height:25px;"></div>
<span class="t" style="left:672.90px;top:408.00px;font-size:11.5px;color:#212529;letter-spacing:0.053px;">Alkupäivä</span>
<svg style="left:743.1px;top:410.7px" width="12" height="7" viewBox="0 0 12 7" ><path d="M1 1L6.0 6L11 1" fill="none" stroke="#343a40" stroke-width="1.4" stroke-linecap="round" stroke-linejoin="round"/></svg>
<span class="t" style="left:770.50px;top:382.90px;font-size:11.5px;color:#212529;letter-spacing:-0.219px;">Rivit</span>
<div class="mi" style="left:770px;top:401px;width:64px;height:25px;"></div>
<span class="t" style="left:777.60px;top:408.00px;font-size:11.5px;color:#212529;letter-spacing:0.450px;">25</span>
<svg style="left:812.8px;top:410.7px" width="12" height="7" viewBox="0 0 12 7" ><path d="M1 1L6.0 6L11 1" fill="none" stroke="#343a40" stroke-width="1.4" stroke-linecap="round" stroke-linejoin="round"/></svg>
<span class="t" style="left:839.70px;top:382.90px;font-size:11.5px;color:#212529;letter-spacing:0.184px;">Kohde</span>
<div class="" style="left:836px;top:398px;width:120px;height:31px;background:#c0e4c1"></div>
<div class="" style="left:839px;top:401px;width:114px;height:25px;background:#fff;border:1px solid #6fc274"></div>
<span class="t" style="left:847.20px;top:408.00px;font-size:11.5px;color:#212529;letter-spacing:0.242px;">Aloitetut</span>
<svg style="left:931.8px;top:410.7px" width="12" height="7" viewBox="0 0 12 7" ><path d="M1 1L6.0 6L11 1" fill="none" stroke="#343a40" stroke-width="1.4" stroke-linecap="round" stroke-linejoin="round"/></svg>
<div class="" style="left:269px;top:431px;width:800px;height:1px;background:#dee2e6"></div>
<div class="" style="left:275px;top:432px;width:58px;height:30px;background:#e9ecef"></div>
<svg style="left:284.5px;top:441px" width="8.6" height="10" viewBox="0 0 8.6 10" ><rect x="0" y="0" width="2" height="10" rx=".5" fill="#52525a"/><path d="M8.100 .6V9.400L2.300 5Z" fill="#52525a" stroke="#52525a" stroke-width="1" stroke-linejoin="round"/></svg>
<svg style="left:311.6px;top:441px" width="13.4" height="10" viewBox="0 0 13.4 10" ><path d="M6.400 .6V9.400L.6 5ZM12.800 .6V9.400L7 5Z" fill="#52525a" stroke="#52525a" stroke-width="1" stroke-linejoin="round"/></svg>
<svg style="left:342.7px;top:441px" width="13.4" height="10" viewBox="0 0 13.4 10" ><path d="M.6 .6V9.400L6.400 5ZM7 .6V9.400L12.800 5Z" fill="#0a970c" stroke="#0a970c" stroke-width="1" stroke-linejoin="round"/></svg>
<svg style="left:374.4px;top:441px" width="8.6" height="10" viewBox="0 0 8.6 10" ><rect x="6.600" y="0" width="2" height="10" rx=".5" fill="#0a970c"/><path d="M.5 .6V9.400L6.300 5Z" fill="#0a970c" stroke="#0a970c" stroke-width="1" stroke-linejoin="round"/></svg>
<span class="t" style="left:401.12px;top:440.00px;font-size:12.5px;color:#e0854a;">1</span>
<span class="t" style="left:427.02px;top:440.00px;font-size:12.5px;color:#0a970c;">2</span>
<span class="t" style="left:452.92px;top:440.00px;font-size:12.5px;color:#0a970c;">3</span>
<span class="t" style="left:479.12px;top:440.00px;font-size:12.5px;color:#0a970c;">4</span>
<span class="t" style="left:505.02px;top:440.00px;font-size:12.5px;color:#0a970c;">5</span>
<span class="t" style="left:532.40px;top:440.00px;font-size:12.5px;color:#212529;letter-spacing:-0.016px;">Kpl:</span>
<span class="t" style="left:557.50px;top:440.00px;font-size:12.5px;font-weight:700;color:#212529;letter-spacing:0.820px;">140</span>
<span class="t" style="left:278.80px;top:473.00px;font-size:12.5px;font-weight:700;color:#0a9a14;letter-spacing:0.984px;">Nro</span>
<span class="t" style="left:365.90px;top:473.00px;font-size:12.5px;font-weight:700;color:#0a9a14;letter-spacing:0.706px;">Projekti</span>
<span class="t" style="left:620.10px;top:473.00px;font-size:12.5px;font-weight:700;color:#e88a50;letter-spacing:0.482px;">Alkupvm. - Loppupvm.</span>
<svg style="left:770.5px;top:476.3px" width="9" height="5" viewBox="0 0 9 5" ><path d="M0 5H9L4.500 0Z" fill="#000"/></svg>
<span class="t" style="left:797.40px;top:473.00px;font-size:12.5px;font-weight:700;color:#0a9a14;letter-spacing:0.779px;">Tehtävä</span>
<div class="" style="left:275px;top:493px;width:773px;height:1px;background:#dee2e6"></div>
<div class="" style="left:275px;top:494px;width:773px;height:27px;background:#f2f2f2;border-bottom:1px solid #dee2e6"></div>
<a class="t lnk" style="left:278.70px;top:500.00px;font-size:12.5px;color:#12991a;letter-spacing:0.305px;">PN20222.1</a>
<span class="t" style="left:620.50px;top:500.00px;font-size:12.5px;color:#050505;letter-spacing:0.300px;">10.09.2022 -</span>
<span class="t" style="left:797.20px;top:500.00px;font-size:12.5px;color:#050505;letter-spacing:0.745px;">Aloitus</span>
<div class="" style="left:275px;top:521px;width:773px;height:27px;background:#fff;border-bottom:1px solid #dee2e6"></div>
<a class="t lnk" style="left:278.70px;top:527.00px;font-size:12.5px;color:#12991a;letter-spacing:0.346px;">PN20222</a>
<span class="t" style="left:620.50px;top:527.00px;font-size:12.5px;color:#050505;letter-spacing:0.300px;">10.09.2022 -</span>
<div class="" style="left:275px;top:548px;width:773px;height:27px;background:#f2f2f2;border-bottom:1px solid #dee2e6"></div>
<a class="t lnk" style="left:278.70px;top:554.00px;font-size:12.5px;color:#12991a;letter-spacing:0.346px;">PN20195</a>
<span class="t" style="left:365.90px;top:554.00px;font-size:12.5px;color:#050505;letter-spacing:0.626px;">Korjausrakentaminen</span>
<span class="t" style="left:620.50px;top:554.00px;font-size:12.5px;color:#050505;letter-spacing:0.300px;">01.09.2022 -</span>
<span class="t" style="left:797.20px;top:554.00px;font-size:12.5px;color:#050505;letter-spacing:0.626px;">Korjausrakentaminen</span>
<div class="" style="left:275px;top:575px;width:773px;height:27px;background:#fff;border-bottom:1px solid #dee2e6"></div>
<a class="t lnk" style="left:278.70px;top:581.00px;font-size:12.5px;color:#12991a;letter-spacing:0.346px;">PN20223</a>
<span class="t" style="left:365.90px;top:581.00px;font-size:12.5px;color:#050505;letter-spacing:0.402px;">Kaikki palvelut Oy urakka</span>
<span class="t" style="left:620.50px;top:581.00px;font-size:12.5px;color:#050505;letter-spacing:0.298px;">01.09.2022 - 07.09.2022</span>
<span class="t" style="left:797.20px;top:581.00px;font-size:12.5px;color:#050505;letter-spacing:0.402px;">Kaikki palvelut Oy urakka</span>
<div class="" style="left:275px;top:602px;width:773px;height:27px;background:#f2f2f2;border-bottom:1px solid #dee2e6"></div>
<a class="t lnk" style="left:278.70px;top:608.00px;font-size:12.5px;color:#12991a;letter-spacing:0.094px;">KP96458</a>
<span class="t" style="left:365.90px;top:608.00px;font-size:12.5px;color:#050505;letter-spacing:0.379px;">Kaikki Palvelut Oy, Yrittäjäntie 105</span>
<span class="t" style="left:620.50px;top:608.00px;font-size:12.5px;color:#050505;letter-spacing:0.253px;">06.05.2022 - 31.12.2022</span>
<span class="t" style="left:797.20px;top:608.00px;font-size:12.5px;color:#050505;letter-spacing:0.379px;">Kaikki Palvelut Oy, Yrittäjäntie 105</span>
<div class="" style="left:275px;top:629px;width:773px;height:27px;background:#fff;border-bottom:1px solid #dee2e6"></div>
<a class="t lnk" style="left:278.70px;top:635.00px;font-size:12.5px;color:#12991a;letter-spacing:0.256px;">9909L2</a>
<span class="t" style="left:365.90px;top:635.00px;font-size:12.5px;color:#050505;letter-spacing:0.402px;">Asennus Urakka Oy (laskutettava työ 2)</span>
<span class="t" style="left:620.50px;top:635.00px;font-size:12.5px;color:#050505;letter-spacing:0.285px;">01.02.2022 - 25.05.2023</span>
<span class="t" style="left:797.20px;top:635.00px;font-size:12.5px;color:#050505;letter-spacing:0.402px;">Asennus Urakka Oy (laskutettava työ 2)</span>
<div class="" style="left:275px;top:656px;width:773px;height:27px;background:#f2f2f2;border-bottom:1px solid #dee2e6"></div>
<a class="t lnk" style="left:278.70px;top:662.00px;font-size:12.5px;color:#12991a;letter-spacing:0.329px;">2021</a>
<span class="t" style="left:365.90px;top:662.00px;font-size:12.5px;color:#050505;letter-spacing:0.316px;">Työmaa Saneeraus 2021</span>
<span class="t" style="left:620.50px;top:662.00px;font-size:12.5px;color:#050505;letter-spacing:0.253px;">01.01.2021 - 31.12.2021</span>
<span class="t" style="left:797.20px;top:662.00px;font-size:12.5px;color:#050505;letter-spacing:0.316px;">Työmaa Saneeraus 2021</span>
<div class="" style="left:275px;top:683px;width:773px;height:27px;background:#fff;border-bottom:1px solid #dee2e6"></div>
<a class="t lnk" style="left:278.70px;top:689.00px;font-size:12.5px;color:#12991a;letter-spacing:0.292px;">PN20213.2</a>
<span class="t" style="left:365.90px;top:689.00px;font-size:12.5px;color:#050505;letter-spacing:0.595px;">Maarakennus</span>
<span class="t" style="left:620.50px;top:689.00px;font-size:12.5px;color:#050505;letter-spacing:0.253px;">01.01.2021 - 31.12.2021</span>
<span class="t" style="left:797.20px;top:689.00px;font-size:12.5px;color:#050505;letter-spacing:0.026px;">Toka vaihe</span>
<div class="" style="left:275px;top:710px;width:773px;height:27px;background:#f2f2f2;border-bottom:1px solid #dee2e6"></div>
<a class="t lnk" style="left:278.70px;top:716.00px;font-size:12.5px;color:#12991a;letter-spacing:0.282px;">PN20213.2.1</a>
<span class="t" style="left:365.90px;top:716.00px;font-size:12.5px;color:#050505;letter-spacing:0.595px;">Maarakennus</span>
<span class="t" style="left:620.50px;top:716.00px;font-size:12.5px;color:#050505;letter-spacing:0.253px;">01.01.2021 - 31.12.2021</span>
<span class="t" style="left:797.20px;top:716.00px;font-size:12.5px;color:#050505;letter-spacing:0.442px;">Toka vaihe / Toisen alityö</span>
<div class="" style="left:275px;top:737px;width:773px;height:27px;background:#fff;border-bottom:1px solid #dee2e6"></div>
<a class="t lnk" style="left:278.70px;top:743.00px;font-size:12.5px;color:#12991a;letter-spacing:0.312px;">PN20213</a>
<span class="t" style="left:365.90px;top:743.00px;font-size:12.5px;color:#050505;letter-spacing:0.595px;">Maarakennus</span>
<span class="t" style="left:620.50px;top:743.00px;font-size:12.5px;color:#050505;letter-spacing:0.253px;">01.01.2021 - 31.12.2021</span>
<span class="t" style="left:797.20px;top:743.00px;font-size:12.5px;color:#050505;letter-spacing:0.595px;">Maarakennus</span>
<div class="" style="left:275px;top:764px;width:773px;height:27px;background:#f2f2f2;border-bottom:1px solid #dee2e6"></div>
<div class="" style="left:1053px;top:462px;width:15px;height:310px;background:#fafafa"></div>
<svg style="left:1056px;top:467px" width="9.2" height="7" viewBox="0 0 9.2 7" ><path d="M1 6.300H8.200L4.600 .9Z" fill="#8b8b8b" stroke="#8b8b8b" stroke-width="1.400" stroke-linejoin="round"/></svg>
<div class="" style="left:1056px;top:480px;width:9px;height:300px;background:#8b8b8b;border-radius:4.500px"></div>
<div class="" style="left:839px;top:427.5px;width:114px;height:281px;background:#fff;border:1px solid #767676"></div>
<div class="" style="left:840px;top:472px;width:112px;height:24px;background:#1967d2"></div>
<span class="t" style="left:848.70px;top:433.90px;font-size:11px;font-weight:700;color:#212529;letter-spacing:0.306px;">Projekti</span>
<span class="t" style="left:866.60px;top:454.50px;font-size:11px;color:#212529;letter-spacing:0.498px;">Omat</span>
<span class="t" style="left:866.60px;top:478.50px;font-size:11px;color:#fff;letter-spacing:0.469px;">Aloitetut</span>
<span class="t" style="left:866.60px;top:502.50px;font-size:11px;color:#212529;letter-spacing:0.366px;">Valmiit</span>
<span class="t" style="left:866.60px;top:526.70px;font-size:11px;color:#212529;letter-spacing:-0.015px;">Voimassa</span>
<span class="t" style="left:866.60px;top:550.80px;font-size:11px;color:#212529;letter-spacing:0.426px;">Peruutettu</span>
<span class="t" style="left:848.50px;top:574.10px;font-size:11px;font-weight:700;color:#212529;letter-spacing:0.176px;">Sovellukset</span>
<span class="t" style="left:866.60px;top:595.00px;font-size:11px;color:#212529;letter-spacing:0.357px;">Myyntitilaus</span>
<span class="t" style="left:866.60px;top:619.00px;font-size:11px;color:#212529;letter-spacing:0.298px;">Ostotilaus</span>
<span class="t" style="left:866.60px;top:643.00px;font-size:11px;color:#212529;letter-spacing:0.541px;">Huolto</span>
<span class="t" style="left:866.60px;top:667.00px;font-size:11px;color:#212529;letter-spacing:0.369px;">Tuotanto</span>
<span class="t" style="left:866.60px;top:691.00px;font-size:11px;color:#212529;letter-spacing:0.434px;">Tuotekortti</span>
</div></body></html>
